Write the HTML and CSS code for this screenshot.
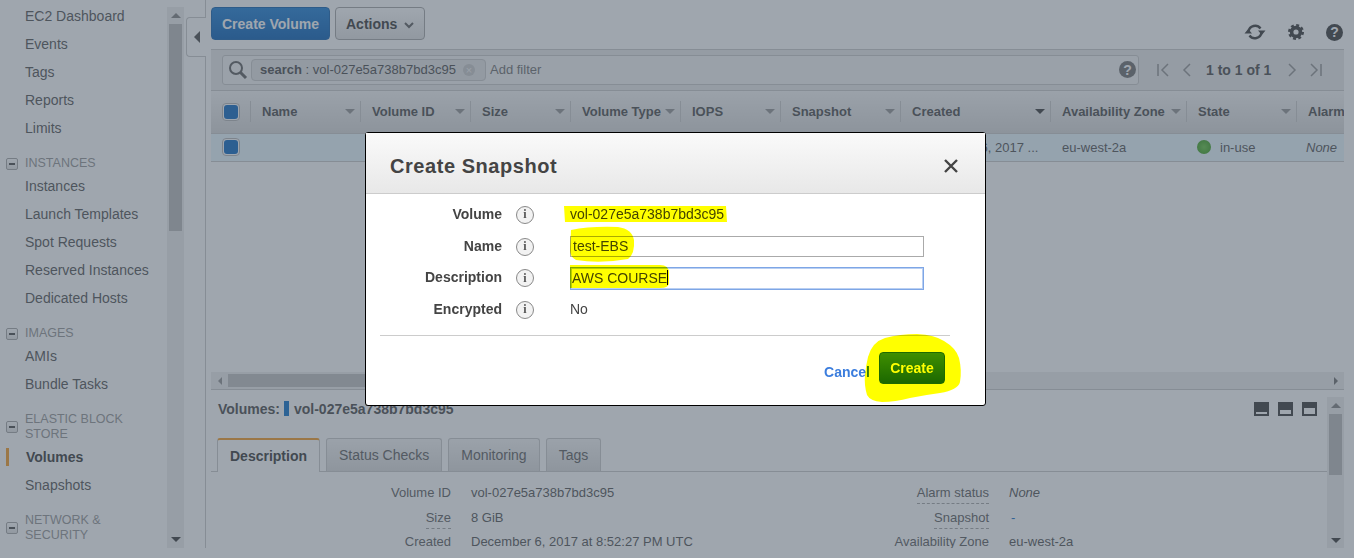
FILE: index.html
```html
<!DOCTYPE html>
<html lang="en">
<head>
<meta charset="utf-8">
<title>Create Snapshot</title>
<link rel="stylesheet" href="styles.css">
</head>
<body>
<div class="app">
  <aside class="sidebar">
    <nav class="nav">
      <a class="item">EC2 Dashboard</a>
      <a class="item">Events</a>
      <a class="item">Tags</a>
      <a class="item">Reports</a>
      <a class="item">Limits</a>
      <div class="group"><span class="minus"></span><span>INSTANCES</span></div>
      <a class="item">Instances</a>
      <a class="item">Launch Templates</a>
      <a class="item">Spot Requests</a>
      <a class="item">Reserved Instances</a>
      <a class="item">Dedicated Hosts</a>
      <div class="group"><span class="minus"></span><span>IMAGES</span></div>
      <a class="item">AMIs</a>
      <a class="item">Bundle Tasks</a>
      <div class="group"><span class="minus"></span><span>ELASTIC BLOCK<br>STORE</span></div>
      <a class="item active">Volumes</a>
      <a class="item">Snapshots</a>
      <div class="group"><span class="minus"></span><span>NETWORK &amp;<br>SECURITY</span></div>
    </nav>
    <div class="vscroll">
      <div class="arrow-box"><span class="tri up"></span></div>
      <div class="vthumb"></div>
      <div class="grow"></div>
      <div class="arrow-box"><span class="tri down"></span></div>
    </div>
  </aside>

  <div class="toggle"><div class="toggle-tab"><span class="tri left big"></span></div></div>

  <main class="main">
    <div class="toolbar">
      <button class="btn primary">Create Volume</button>
      <button class="btn">Actions <svg class="chev" viewBox="0 0 10 7" width="10" height="7"><path d="M1 1l4 4 4-4" fill="none" stroke="#666" stroke-width="2"/></svg></button>
      <div class="grow"></div>
      <div class="tools">
        <svg width="22" height="20" viewBox="0 0 22 20"><path d="M4.5 9.5A6.7 6.7 0 0 1 16.5 6.5M17.5 10.5A6.7 6.7 0 0 1 5.5 13.5" fill="none" stroke="#444" stroke-width="2.4"/><path d="M14 8.5h7.5L17.8 13zM0.5 11.5H8L4.2 7z" fill="#444"/></svg>
        <svg width="16" height="16" viewBox="0 0 16 16"><circle cx="8" cy="8" r="4.4" fill="none" stroke="#444" stroke-width="3.6"/><circle cx="8" cy="8" r="6.7" fill="none" stroke="#444" stroke-width="2.6" stroke-dasharray="2.9 2.36"/></svg>
        <span class="help big-help">?</span>
      </div>
    </div>

    <div class="filterbar">
      <div class="searchbox">
        <svg class="lens" width="20" height="20" viewBox="0 0 20 20"><circle cx="8" cy="8" r="6" fill="none" stroke="#666" stroke-width="2"/><path d="M12.5 12.5l5.5 5.5" stroke="#666" stroke-width="3"/></svg>
        <span class="tag"><b>search</b> : vol-027e5a738b7bd3c95<span class="tag-x">×</span></span>
        <span class="addfilter">Add filter</span>
        <span class="grow"></span>
        <span class="help grey-help">?</span>
      </div>
      <div class="pager">
        <svg width="14" height="14" viewBox="0 0 14 14"><path d="M2 1v12M12 1L6 7l6 6" fill="none" stroke="#999" stroke-width="1.5"/></svg>
        <svg width="10" height="14" viewBox="0 0 10 14"><path d="M8 1L2 7l6 6" fill="none" stroke="#999" stroke-width="1.5"/></svg>
        <b class="count">1 to 1 of 1</b>
        <svg width="10" height="14" viewBox="0 0 10 14"><path d="M2 1l6 6-6 6" fill="none" stroke="#999" stroke-width="1.5"/></svg>
        <svg width="14" height="14" viewBox="0 0 14 14"><path d="M12 1v12M2 1l6 6-6 6" fill="none" stroke="#999" stroke-width="1.5"/></svg>
      </div>
    </div>

    <div class="cols thead">
      <div class="check-cell"><span class="check"></span></div>
      <div class="th"><span>Name</span><span class="tri down soft"></span></div>
      <div class="th"><span>Volume ID</span><span class="tri down soft"></span></div>
      <div class="th"><span>Size</span><span class="tri down soft"></span></div>
      <div class="th"><span>Volume Type</span><span class="tri down soft"></span></div>
      <div class="th"><span>IOPS</span><span class="tri down soft"></span></div>
      <div class="th"><span>Snapshot</span><span class="tri down soft"></span></div>
      <div class="th"><span>Created</span><span class="tri down"></span></div>
      <div class="th"><span>Availability Zone</span><span class="tri down soft"></span></div>
      <div class="th"><span>State</span><span class="tri down soft"></span></div>
      <div class="th last"><span>Alarm</span></div>
    </div>
    <div class="cols trow">
      <div class="check-cell"><span class="check"></span></div>
      <div class="td"></div>
      <div class="td">vol-027e5a73</div>
      <div class="td">8 GiB</div>
      <div class="td">gp2</div>
      <div class="td">100 / 3000</div>
      <div class="td">-</div>
      <div class="td created">December 6, 2017 ...</div>
      <div class="td">eu-west-2a</div>
      <div class="td state"><span class="dot"></span>in-use</div>
      <div class="td none">None</div>
    </div>
    <div class="grow"></div>
    <div class="hscroll">
      <div class="arrow-box"><span class="tri left"></span></div>
      <div class="hthumb"></div>
      <div class="grow"></div>
      <div class="arrow-box"><span class="tri right"></span></div>
    </div>

    <section class="detail">
      <div class="detail-body">
        <div class="detail-head">
          <b>Volumes:</b><span class="bluebar"></span><b>vol-027e5a738b7bd3c95</b>
          <span class="grow"></span>
          <span class="pane p1"></span><span class="pane p2"></span><span class="pane p3"></span>
        </div>
        <div class="tabs">
          <div class="tab current">Description</div>
          <div class="tab">Status Checks</div>
          <div class="tab">Monitoring</div>
          <div class="tab">Tags</div>
        </div>
        <div class="props">
          <div class="lbl"><span>Volume ID</span></div><div class="val">vol-027e5a738b7bd3c95</div>
          <div class="lbl"><span class="dashed">Alarm status</span></div><div class="val none">None</div>
          <div class="lbl"><span class="dashed">Size</span></div><div class="val">8 GiB</div>
          <div class="lbl"><span class="dashed">Snapshot</span></div><div class="val"><span class="snap">-</span></div>
          <div class="lbl"><span>Created</span></div><div class="val">December 6, 2017 at 8:52:27 PM UTC</div>
          <div class="lbl"><span>Availability Zone</span></div><div class="val">eu-west-2a</div>
        </div>
      </div>
      <div class="vscroll small">
        <div class="arrow-box"><span class="tri up"></span></div>
        <div class="vthumb short"></div>
        <div class="grow"></div>
        <div class="arrow-box"><span class="tri down"></span></div>
      </div>
    </section>
  </main>
</div>

<div class="backdrop"></div>

<div class="modal">
  <header class="modal-head">
    <h1>Create Snapshot</h1>
    <svg width="14" height="14" viewBox="0 0 14 14"><path d="M1 1l12 12M13 1L1 13" stroke="#444" stroke-width="2.4"/></svg>
  </header>
  <div class="form">
    <div class="f-label">Volume</div><span class="info">i</span><div class="f-val">vol-027e5a738b7bd3c95</div>
    <div class="f-label">Name</div><span class="info">i</span><div class="input">test-EBS</div>
    <div class="f-label">Description</div><span class="info">i</span><div class="input focus">AWS COURSE<span class="caret"></span></div>
    <div class="f-label">Encrypted</div><span class="info">i</span><div class="f-val">No</div>
  </div>
  <hr class="rule">
  <footer class="modal-foot">
    <a class="cancel">Cancel</a>
    <button class="create">Create</button>
  </footer>
</div>

<svg class="marker" width="1354" height="558" viewBox="0 0 1354 558">
  <path d="M564 206H726L727 222H565Z"/>
  <path d="M571 230Q590 226 618 227Q632 229 634 240Q635 254 628 259Q600 264 576 260Q570 257 570 250Z"/>
  <path d="M570 265H660Q669 265 669 273V283Q669 288 660 288H570Z"/>
  <path d="M868 357Q872 342 885 338Q900 334 917 334Q935 335 944 341Q956 348 959 358Q962 370 960 382Q958 390 940 393Q925 395 910 398Q895 402 882 402Q870 401 867 395Q864 385 865 375Q866 365 868 357Z"/>
</svg>
</body>
</html>
```
FILE: styles.css
```css
* { box-sizing: border-box; }
html, body { margin: 0; height: 100%; overflow: hidden; background: #fff; }
body { font: 14px "Liberation Sans", Arial, sans-serif; color: #555; }
.grow { flex: 1 1 auto; }

.app { display: flex; height: 548px; width: 1344px; }

/* sidebar */
.sidebar { flex: 0 0 184px; display: flex; }
.nav { flex: 0 0 167px; padding-top: 2px; overflow: hidden; }
.item { display: flex; align-items: center; height: 28px; padding-left: 25px; color: #5c5c5c; }
.item.active { padding-left: 6px; font-weight: bold; color: #444; }
.item.active::before { content: ""; width: 3px; height: 18px; margin-right: 17px; background: #f7a130; }
.group { display: flex; align-items: center; gap: 7px; padding: 14px 0 1px 6px; color: #9a9a9a; line-height: 15px; font-size: 12.5px; }
.minus { flex: 0 0 12px; height: 12px; border: 1px solid #aaa; border-radius: 2px; background: linear-gradient(#fff, #e4e4e4); display: flex; align-items: center; justify-content: center; }
.minus::before { content: ""; width: 6px; height: 2px; background: #555; }

.vscroll { flex: 0 0 17px; margin-top: 7px; background: #efefef; display: flex; flex-direction: column; }
.vscroll.small { margin-top: 7px; height: 152px; }
.arrow-box { flex: 0 0 17px; height: 17px; display: flex; align-items: center; justify-content: center; }
.vthumb { flex: 0 0 207px; width: 13px; margin: 0 auto; background: #bfbfbf; }
.vthumb.short { flex-basis: 61px; }

.tri { display: inline-block; width: 0; height: 0; border-style: solid; border-color: transparent; flex: none; }
.tri.up { border-width: 0 5px 5px; border-bottom-color: #888; }
.tri.down { border-width: 5px 5px 0; border-top-color: #444; }
.tri.down.soft { border-top-color: #999; }
.tri.left { border-width: 4px 4px 4px 0; border-right-color: #999; }
.tri.right { border-width: 4px 0 4px 4px; border-left-color: #777; }
.tri.left.big { border-width: 6px 6px 6px 0; border-right-color: #555; }

.toggle { flex: 0 0 22px; margin-right: 5px; border-right: 1px solid #ccc; }
.toggle-tab { margin: 17px -1px 0 2px; height: 40px; background: #fff; border: 1px solid #ccc; border-right: 0; border-radius: 4px 0 0 4px; display: flex; align-items: center; padding-left: 7px; }

/* main */
.main { flex: 1 1 0; min-width: 0; display: flex; flex-direction: column; overflow: hidden; }
.toolbar { flex: 0 0 49px; padding-top: 7px; display: flex; align-items: flex-start; gap: 5px; }
.btn { height: 33px; padding: 0 10px; border: 1px solid #aaa; border-radius: 4px; background: linear-gradient(#fff, #e4e4e4); color: #444; font: bold 14px "Liberation Sans", Arial, sans-serif; }
.btn.primary { width: 119px; padding: 0; color: #fff; border-color: #1f6bb5; background: linear-gradient(#2a86d8, #1668ba); }
.chev { margin-left: 3px; }
.tools { display: flex; align-items: center; gap: 22px; padding: 15px 1px 0 0; }
.help { display: flex; align-items: center; justify-content: center; border-radius: 50%; color: #fff; font-weight: bold; }
.big-help { width: 17px; height: 17px; background: #444; font-size: 14px; }
.grey-help { width: 17px; height: 17px; background: #777; font-size: 14px; margin-right: 1px; }

.filterbar { flex: 0 0 42px; display: flex; align-items: center; padding: 0 0 0 11px; background: #ebebeb; border-top: 1px solid #ccc; border-bottom: 1px solid #ccc; }
.searchbox { width: 917px; height: 30px; margin-bottom: 1px; display: flex; align-items: center; padding: 0 1px 0 5px; background: #f4f4f4; border: 1px solid #ccc; border-radius: 3px; font-size: 13px; }
.lens { flex: none; }
.tag { display: flex; align-items: center; height: 22px; width: 235px; margin-left: 3px; padding-left: 8px; background: #e6e6e6; border: 1px solid #ccc; border-radius: 4px; color: #555; white-space: pre; }
.tag b { color: #555; }
.tag-x { width: 12px; height: 12px; margin-left: 7px; border-radius: 50%; background: #ccc; color: #f4f4f4; display: flex; align-items: center; justify-content: center; font-size: 11px; }
.addfilter { margin-left: 4px; color: #777; }
.pager { display: flex; align-items: center; margin-left: 17px; }
.pager svg:nth-child(2) { margin-left: 12px; }
.count { margin: 0 16px 0 14px; color: #555; white-space: nowrap; }
.pager svg:last-child { margin-left: 12px; }

.cols { display: grid; grid-template-columns: 40px 110px 110px 100px 110px 100px 120px 150px 136px 110px 47px; font-size: 13px; }
.thead { flex: 0 0 43px; align-items: center; padding-bottom: 1px; background: linear-gradient(#f6f6f6, #dadada); border-bottom: 1px solid #ccc; font-weight: bold; color: #555; }
.check-cell { display: flex; justify-content: flex-start; padding-left: 11px; }
.check { width: 18px; height: 18px; border: 1px solid #bbb; border-radius: 4px; background: #fff; padding: 1px; }
.check::before { content: ""; display: block; width: 100%; height: 100%; border-radius: 3px; background: #1b70c4; }
.thead .check-cell { height: 21px; align-items: center; border-right: 1px solid #ccc; }
.th { height: 21px; display: flex; align-items: center; justify-content: space-between; padding: 0 5px 0 11px; border-right: 1px solid #ccc; white-space: nowrap; }
.th.last { border: 0; padding-right: 0; }
.trow { flex: 0 0 28px; align-items: center; padding-bottom: 1px; background: #ebf8ff; border-bottom: 1px solid #ccc; }
.td { padding-left: 11px; white-space: nowrap; color: #5c5c5c; }
.created { padding-left: 16px; }
.state { display: flex; align-items: center; gap: 9px; padding-left: 10px; }
.dot { width: 14px; height: 14px; border-radius: 50%; background: radial-gradient(#6cc84c, #3c9a22); }
.none { font-style: italic; }
.trow .none { padding-left: 9px; }

.hscroll { flex: 0 0 18px; display: flex; background: #efefef; border-bottom: 1px solid #ccc; }
.hthumb { flex: 0 0 640px; height: 13px; margin-top: 2px; background: #c4c4c4; }

.detail { flex: 0 0 158px; display: flex; overflow: hidden; }
.detail-body { flex: 1 1 0; min-width: 0; }
.detail-head { height: 48px; display: flex; align-items: flex-start; padding: 11px 10px 0 7px; color: #555; line-height: 16px; }
.bluebar { width: 5px; height: 15px; margin: 0 5px 0 4px; background: #1b78cc; }
.pane { width: 15px; height: 14px; margin: 1px 0 0 9px; background: #444; padding: 0; position: relative; }
.pane::after { content: ""; position: absolute; left: 2px; right: 2px; bottom: 2px; background: #fff; }
.p1::after { height: 2px; }
.p2::after { height: 4px; }
.p3::after { height: 6px; }
.tabs { height: 34px; display: flex; gap: 6px; padding-left: 6px; border-bottom: 1px solid #ccc; }
.tab { display: flex; align-items: center; justify-content: center; height: 33px; padding: 0 12px; background: linear-gradient(#f6f6f6, #dddddd); border: 1px solid #ccc; border-bottom: 0; border-radius: 3px 3px 0 0; color: #666; }
.tab.current { width: 103px; padding: 0; height: 34px; background: #fff; border-top: 2px solid #f7a130; font-weight: bold; color: #444; }
.props { display: grid; grid-template-columns: 240px 258px 240px 1fr; column-gap: 20px; grid-auto-rows: 24.4px; align-items: center; padding-top: 8.6px; font-size: 13px; line-height: 13px; }
.lbl { text-align: right; color: #666; }
.lbl .dashed { border-bottom: 1px dashed #aaa; padding-bottom: 3px; }
.val { color: #5c5c5c; white-space: nowrap; }
.snap { color: #1b78cc; padding-left: 2px; }

/* overlay */
.backdrop { position: fixed; inset: 0; background: rgba(63, 77, 93, .5); }

.modal { position: fixed; left: 365px; top: 132px; width: 621px; height: 274px; background: #fff; border: 1px solid #000; border-radius: 3px; }
.modal-head { height: 61px; display: flex; align-items: center; justify-content: space-between; padding: 6px 27px 0 24px; background: linear-gradient(#fafafa, #e8e8e8); border-bottom: 1px solid #ccc; }
.modal-head h1 { margin: 0; font-size: 20px; font-weight: bold; color: #444; letter-spacing: .55px; }
.form { display: grid; grid-template-columns: 136px 18px 1fr; grid-auto-rows: 31.7px; column-gap: 14px; align-items: center; padding-top: 4px; }
.form > .f-val { margin-left: 22px; }
.form > .input { margin: 2px 0 0 22px; }
.f-label { text-align: right; font-weight: bold; color: #444; }
.info { width: 18px; height: 18px; margin-top: 2px; border: 1px solid #888; border-radius: 50%; background: #f2f2f2; color: #555; font: bold 12px "Liberation Serif", serif; display: flex; align-items: center; justify-content: center; }
.f-val { color: #444; }
.input { width: 354px; height: 21px; padding-left: 2px; border: 1px solid #aaa; color: #444; line-height: 19px; }
.input.focus { height: 23px; border: 1px solid #7ea6e6; padding-left: 1px; box-shadow: 0 0 0 1px #b9cff2 inset; line-height: 21px; }
.caret { display: inline-block; width: 1px; height: 15px; background: #000; vertical-align: -2px; }
.rule { margin: 10px 35px 0 14px; border: 0; border-top: 1px solid #ccc; }
.modal-foot { display: flex; align-items: flex-start; justify-content: flex-end; gap: 9px; padding: 16px 40px 0 0; }
.cancel { margin-top: 12px; color: #3b7ddd; font-weight: bold; }
.create { width: 66px; height: 32px; border: 1px solid #1f6a00; border-radius: 4px; background: linear-gradient(#3f8f08, #1c6800); color: #fff; font: bold 14px "Liberation Sans", Arial, sans-serif; padding: 0; }

.marker { position: fixed; left: 0; top: 0; mix-blend-mode: multiply; pointer-events: none; }
.marker path { fill: #ffff00; }
```
